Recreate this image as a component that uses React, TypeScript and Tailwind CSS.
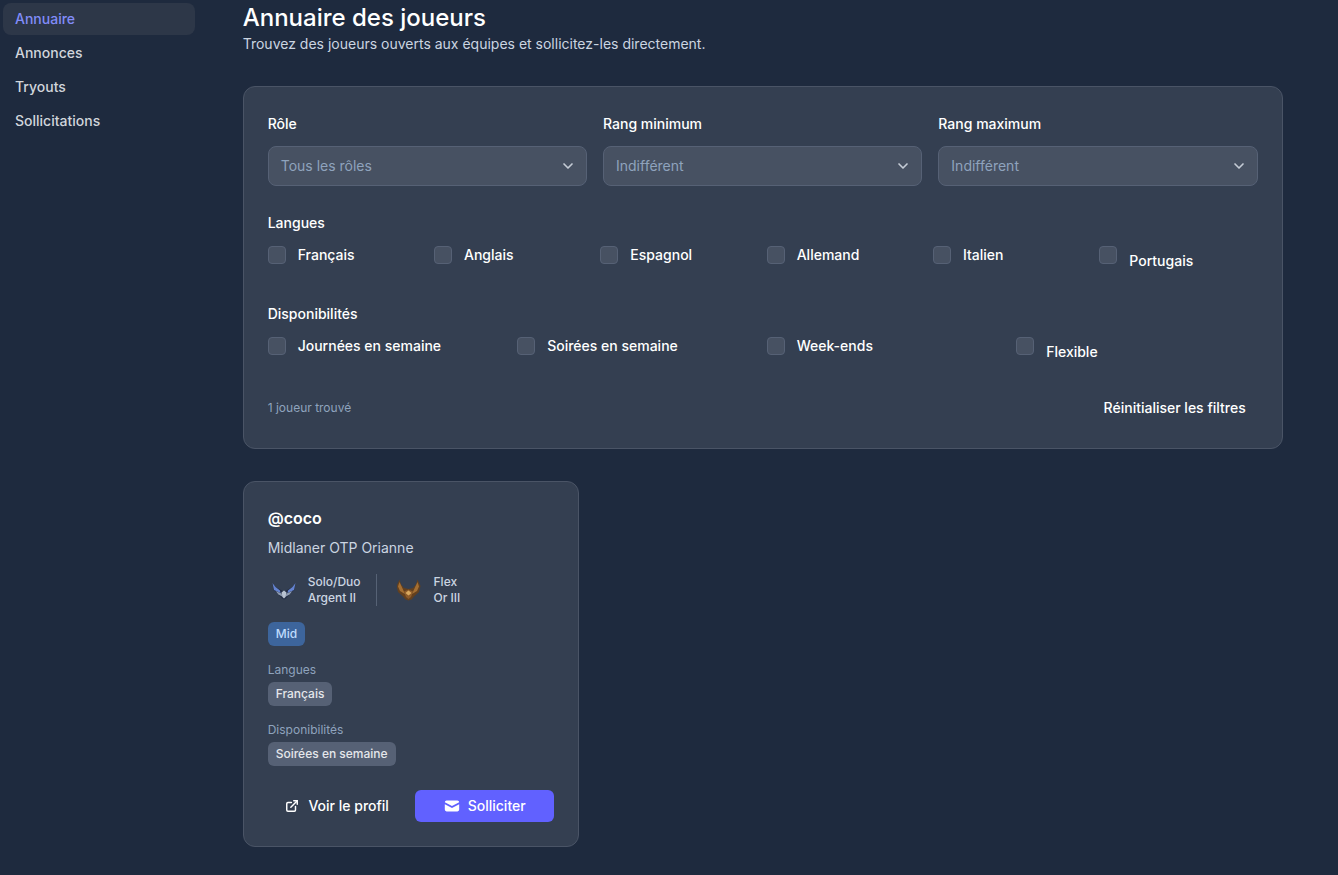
import type { ReactNode } from "react";
import { ChevronDown, ExternalLink } from "lucide-react";
import { HiMail } from "react-icons/hi";

const navItems = ["Annuaire", "Annonces", "Tryouts", "Sollicitations"];
const langues = ["Français", "Anglais", "Espagnol", "Allemand", "Italien", "Portugais"];
const dispos = ["Journées en semaine", "Soirées en semaine", "Week-ends", "Flexible"];

function FilterSelect({ label, value }: { label: string; value: string }) {
  return (
    <div>
      <div className="mb-3 text-sm leading-5 font-medium text-white">{label}</div>
      <div className="flex h-10 items-center justify-between rounded-lg border border-[#566175] bg-[#475162] pr-[10px] pl-3 text-sm text-[#8fa3bd]">
        <span>{value}</span>
        <ChevronDown className="h-4 w-4 text-[#c5ccd6]" strokeWidth={2.5} />
      </div>
    </div>
  );
}

function CheckItem({ label, low }: { label: string; low?: boolean }) {
  return (
    <label className="flex items-start gap-3">
      <span className="mt-px h-[18px] w-[18px] shrink-0 rounded border border-[#566175] bg-[#475162]" />
      <span className={low ? "mt-[6px] text-sm leading-5 font-medium text-white" : "text-sm leading-5 font-medium text-white"}>{label}</span>
    </label>
  );
}

function SilverWings() {
  return (
    <svg width="26" height="22" viewBox="0 0 26 22" className="shrink-0">
      <path d="M1.5 4 L2.5 11 L7 15 L11 19.5 L13 20.5 L15 19.5 L19 15 L23.5 11 L24.5 4 L21.5 8 L16 11 L13 13 L10 11 L4.5 8Z" fill="#232d45" />
      <path d="M1.5 4 L3 11 L9.5 14 L9 11.5 L4.5 8Z" fill="#6483d0" />
      <path d="M24.5 4 L23 11 L16.5 14 L17 11.5 L21.5 8Z" fill="#6483d0" />
      <path d="M4.5 12 L10.5 14.5 L12 18 L7.5 15.5Z" fill="#8d9ab0" />
      <path d="M21.5 12 L15.5 14.5 L14 18 L18.5 15.5Z" fill="#8d9ab0" />
      <path d="M10.5 13.5 L13 11.5 L15.5 13.5 L14.5 18 L13 19.5 L11.5 18Z" fill="#b9c3d2" />
    </svg>
  );
}

function GoldWings() {
  return (
    <svg width="26" height="22" viewBox="1.5 0 26 22" className="shrink-0">
      <path d="M4 0.5 L1 7 L2.5 13 L7.5 17.5 L10 20.5 L13 21.5 L16 20.5 L18.5 17.5 L23.5 13 L25 7 L22 0.5 L20.5 5.5 L17.5 9 L13 10 L8.5 9 L5.5 5.5Z" fill="#63401f" />
      <path d="M4 3 L2.5 7.5 L4.5 12 L9.5 15 L7 9.5Z" fill="#a46f33" />
      <path d="M22 3 L23.5 7.5 L21.5 12 L16.5 15 L19 9.5Z" fill="#a46f33" />
      <path d="M8.5 12.5 L13 10.5 L17.5 12.5 L15.5 18 L13 20 L10.5 18Z" fill="#8d5b2a" />
      <path d="M10 14 L13 11.5 L16 14 L13 16.5Z" fill="#d9a95f" />
    </svg>
  );
}

function Rank({ queue, rank, icon }: { queue: string; rank: string; icon: ReactNode }) {
  return (
    <div className="flex items-center gap-[11px] pl-[3px]">
      {icon}
      <div className="text-xs leading-4 font-medium text-[#cbd5e1]">
        <div>{queue}</div>
        <div>{rank}</div>
      </div>
    </div>
  );
}

function Chip({ label, blue }: { label: string; blue?: boolean }) {
  return (
    <span className={blue ? "inline-block rounded-md bg-[#3d659c] px-2 py-1 text-xs leading-4 font-medium text-[#bfdbfe]" : "inline-block rounded-md bg-[#566175] px-2 py-1 text-xs leading-4 font-medium text-[#e5e7eb]"}>
      {label}
    </span>
  );
}

export default function App() {
  return (
    <div className="flex h-[875px] overflow-hidden bg-[#1e2a3e] font-['Inter',sans-serif]">
      <aside className="w-[195px] shrink-0 pt-[3px] pl-[3px]">
        <nav className="flex flex-col gap-[2px]">
          {navItems.map((item, i) => (
            <div
              key={item}
              className={i === 0 ? "flex h-8 items-center rounded-lg bg-[#2d3748] px-3 text-sm font-medium text-[#818cf8]" : "flex h-8 items-center rounded-lg px-3 text-sm font-medium text-[#d1d5db]"}
            >
              {item}
            </div>
          ))}
        </nav>
      </aside>

      <main className="ml-[47.7px] w-[1040px] pt-[2px]">
        <h1 className="text-2xl leading-8 font-medium text-white">Annuaire des joueurs</h1>
        <p className="text-sm leading-5 text-[#cbd5e1]">Trouvez des joueurs ouverts aux équipes et sollicitez-les directement.</p>

        <section className="mt-8 rounded-xl border border-[#4a5466] bg-[#343f51] px-6 pt-[27px] pb-[30px]">
          <div className="grid grid-cols-3 gap-4">
            <FilterSelect label="Rôle" value="Tous les rôles" />
            <FilterSelect label="Rang minimum" value="Indifférent" />
            <FilterSelect label="Rang maximum" value="Indifférent" />
          </div>

          <div className="mt-[27px] text-sm leading-5 font-medium text-white">Langues</div>
          <div className="mt-3 grid grid-cols-6 gap-2">
            {langues.map((l) => (
              <CheckItem key={l} label={l} low={l === "Portugais"} />
            ))}
          </div>

          <div className="mt-[33px] text-sm leading-5 font-medium text-white">Disponibilités</div>
          <div className="mt-3 grid grid-cols-4 gap-2">
            {dispos.map((d) => (
              <CheckItem key={d} label={d} low={d === "Flexible"} />
            ))}
          </div>

          <div className="mt-[36px] flex items-center justify-between">
            <span className="text-xs leading-4 text-[#8fa3bd]">1 joueur trouvé</span>
            <span className="px-3 text-sm leading-5 font-medium text-white">Réinitialiser les filtres</span>
          </div>
        </section>

        <div className="mt-8 grid grid-cols-3 gap-4">
          <article className="rounded-xl border border-[#4a5466] bg-[#343f51] p-6">
            <div className="text-base leading-6 font-semibold text-white">@coco</div>
            <div className="mt-2 text-sm leading-5 text-[#cbd5e1]">Midlaner OTP Orianne</div>

            <div className="mt-4 flex items-center gap-4">
              <Rank queue="Solo/Duo" rank="Argent II" icon={<SilverWings />} />
              <div className="mr-px -ml-px h-8 w-px bg-[#566275]" />
              <Rank queue="Flex" rank="Or III" icon={<GoldWings />} />
            </div>

            <div className="mt-4 flex">
              <Chip label="Mid" blue />
            </div>

            <div className="mt-4 text-xs leading-4 text-[#8fa3bd]">Langues</div>
            <div className="mt-1 flex">
              <Chip label="Français" />
            </div>

            <div className="mt-4 text-xs leading-4 text-[#8fa3bd]">Disponibilités</div>
            <div className="mt-1 flex">
              <Chip label="Soirées en semaine" />
            </div>

            <div className="mt-6 flex gap-2">
              <button className="flex h-8 flex-1 items-center justify-center gap-[9px] rounded-md text-sm font-medium text-white">
                <ExternalLink className="h-[14px] w-[14px]" strokeWidth={2.5} />
                Voir le profil
              </button>
              <button className="flex h-8 flex-1 items-center justify-center gap-[7px] rounded-md bg-[#6161ff] text-sm font-medium text-white">
                <HiMail className="h-[18px] w-[18px]" />
                Solliciter
              </button>
            </div>
          </article>
        </div>
      </main>
    </div>
  );
}
